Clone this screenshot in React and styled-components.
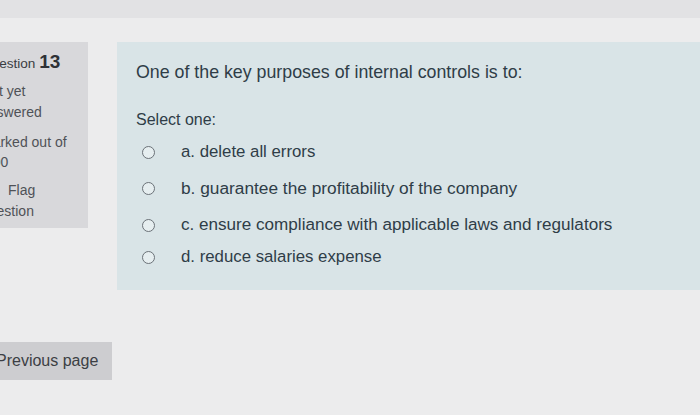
import React from "react";
import styled, { createGlobalStyle } from "styled-components";

const Global = createGlobalStyle`
  html, body { margin: 0; padding: 0; }
  body {
    background: #ececed;
    font-family: "Liberation Sans", Arial, sans-serif;
    overflow: hidden;
    width: 700px;
    height: 415px;
  }
`;

const Page = styled.div`
  width: 700px;
  height: 415px;
  overflow: hidden;
  display: flex;
  flex-direction: column;
`;

const TopBar = styled.div`
  height: 18px;
  background: #e2e2e4;
`;

const Main = styled.div`
  display: flex;
  align-items: flex-start;
  padding-top: 24px;
`;

const Sidebar = styled.div`
  margin-left: -27px;
  width: 115px;
  display: flex;
  flex-direction: column;
  flex-shrink: 0;
`;

const InfoBox = styled.div`
  background: #d8d8db;
  height: 186px;
  box-sizing: border-box;
  padding: 9px 8px 0 8px;
  color: #4f5257;
  font-size: 14px;
`;

const QTitle = styled.div`
  font-size: 13.6px;
  line-height: 22px;
  color: #3a3d42;
  margin-bottom: 6px;
  span {
    font-size: 19px;
    font-weight: 700;
    color: #2e3136;
  }
`;

const InfoLine = styled.div`
  line-height: ${(p) => p.$lh || 21}px;
  margin-bottom: ${(p) => p.$mb || 0}px;
`;

const FlagLine = styled.div`
  line-height: 21px;
  display: flex;
  align-items: center;
`;

const FlagIcon = styled.span`
  display: inline-block;
  width: 27px;
`;

const PrevButton = styled.div`
  margin-top: 114px;
  margin-left: 23px;
  width: 116px;
  height: 38px;
  box-sizing: border-box;
  background: #cdcdd0;
  color: #3c3f44;
  font-size: 16px;
  display: flex;
  align-items: center;
  white-space: nowrap;
`;

const QuestionBox = styled.div`
  margin-left: 29px;
  flex: 1;
  height: 248px;
  box-sizing: border-box;
  background: #d9e4e7;
  padding: 20px 0 0 19px;
  color: #2f3d47;
`;

const QText = styled.div`
  font-size: 17.8px;
  line-height: 20px;
`;

const SelectLabel = styled.div`
  font-size: 16px;
  line-height: 20px;
  margin-top: 28px;
  margin-bottom: 10px;
`;

const Option = styled.div`
  display: flex;
  align-items: center;
  height: ${(p) => p.$h}px;
`;

const Radio = styled.span`
  width: 11px;
  height: 11px;
  border: 1.5px solid #6b7278;
  border-radius: 50%;
  background: #e6eef0;
  margin-left: 6px;
  margin-right: 26px;
  flex-shrink: 0;
`;

const OptText = styled.span`
  font-size: ${(p) => p.$fs}px;
  color: #2f3d47;
`;

const options = [
  { t: "a. delete all errors", h: 24, fs: 16.8 },
  { t: "b. guarantee the profitability of the company", h: 48, fs: 17.3 },
  { t: "c. ensure compliance with applicable laws and regulators", h: 26, fs: 17.1 },
  { t: "d. reduce salaries expense", h: 38, fs: 16.8 },
];

export default function App() {
  return (
    <>
      <Global />
      <Page>
        <TopBar />
        <Main>
          <Sidebar>
            <InfoBox>
              <QTitle>
                Question <span>13</span>
              </QTitle>
              <InfoLine>Not yet</InfoLine>
              <InfoLine $mb={9}>answered</InfoLine>
              <InfoLine $lh={20}>Marked out of</InfoLine>
              <InfoLine $lh={20} $mb={8}>1.00</InfoLine>
              <FlagLine>
                <FlagIcon />
                Flag
              </FlagLine>
              <InfoLine>question</InfoLine>
            </InfoBox>
            <PrevButton>Previous page</PrevButton>
          </Sidebar>
          <QuestionBox>
            <QText>One of the key purposes of internal controls is to:</QText>
            <SelectLabel>Select one:</SelectLabel>
            {options.map((o) => (
              <Option key={o.t} $h={o.h}>
                <Radio />
                <OptText $fs={o.fs}>{o.t}</OptText>
              </Option>
            ))}
          </QuestionBox>
        </Main>
      </Page>
    </>
  );
}
